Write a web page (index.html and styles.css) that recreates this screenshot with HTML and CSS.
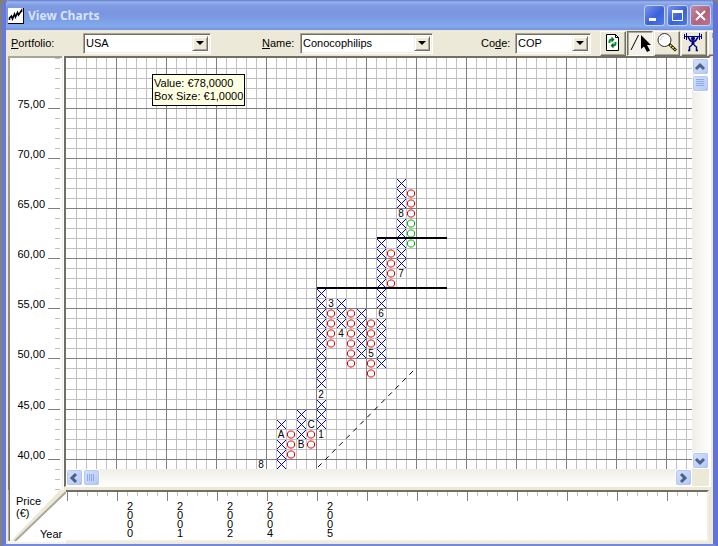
FILE: index.html
```html
<!DOCTYPE html>
<html lang="en">
<head>
<meta charset="utf-8">
<title>View Charts</title>
<link rel="stylesheet" href="styles.css">
</head>
<body>
<div class="window">
  <header class="titlebar">
    <svg class="app-icon" width="16" height="16" viewBox="0 0 16 16"><rect width="16" height="16" fill="#000"/><rect width="15" height="15" fill="#fff"/><path d="M1.500 12V10L3.500 8L4.500 11L6.500 6L7.500 9L9.500 4.500L10.500 7L13.500 2.500V4" fill="none" stroke="#000" stroke-width="1.600"/></svg>
    <h1>View Charts</h1>
    <button class="caption" aria-label="Minimize"><svg width="19" height="19"><rect x="4" y="12" width="7" height="3" fill="#fff"/></svg></button>
    <button class="caption" aria-label="Maximize"><svg width="19" height="19"><path d="M4.500 5V14.500H14.500V5" fill="none" stroke="#fff"/><rect x="4" y="4" width="11" height="3" fill="#fff"/></svg></button>
    <button class="caption close" aria-label="Close"><svg width="19" height="19"><path d="M5 5L14 14M14 5L5 14" stroke="#fff" stroke-width="2"/></svg></button>
  </header>

  <div class="toolbar">
    <label class="portfolio-label" for="portfolio"><u>P</u>ortfolio:</label>
    <div class="combo portfolio"><select id="portfolio"><option>USA</option></select><i class="arrow"></i></div>
    <label class="name-label" for="name"><u>N</u>ame:</label>
    <div class="combo name"><select id="name"><option>Conocophilips</option></select><i class="arrow"></i></div>
    <label class="code-label" for="code">Co<u>d</u>e:</label>
    <div class="combo code"><select id="code"><option>COP</option></select><i class="arrow"></i></div>
    <div class="tools">
      <button class="tool" aria-label="Refresh"><svg width="22" height="22"><path d="M4.500 2.500H13.500L16.500 5.500V18.500H4.500Z" fill="#fff" stroke="#000"/><path d="M13.500 2.500V5.500H16.500" fill="none" stroke="#000"/><path d="M7.500 11V9.500Q7.500 7.500 10 7.500M13.500 10V11.500Q13.500 13.500 11 13.500" fill="none" stroke="#00902c" stroke-width="2"/><path d="M9.500 4.500L12.500 7.500L9.500 10.500ZM11.500 10.500L8.500 13.500L11.500 16.500Z" fill="#006820"/></svg></button>
      <button class="tool pressed" aria-label="Draw line"><svg width="22" height="22"><path d="M2 18L9.500 3" stroke="#000"/><path d="M12 3V17L15 14.500L18 20L21 18.500L18 13H22Z" fill="#000"/></svg></button>
      <button class="tool" aria-label="Zoom"><svg width="22" height="22"><path d="M13 12L20 18.500" stroke="#000" stroke-width="3"/><path d="M14 13L19.500 18" stroke="#ffe020" stroke-width="1.500" stroke-dasharray="2 1"/><circle cx="8.500" cy="8" r="6.500" fill="#fff" stroke="#333"/><path d="M4.500 8A4 4 0 0 1 8 4" stroke="#ccc" fill="none"/></svg></button>
      <button class="tool" aria-label="Indicators"><svg width="22" height="22"><g stroke="#000080" fill="none"><path d="M1 4.500H19"/><path d="M1.500 2V7M3.500 1V8M16.500 1V8M18.500 2V7"/><path d="M5 5L7.500 9H12.500L15 5" stroke-width="1.500"/><path d="M10 9V13" stroke-width="3"/><path d="M9 13L6.500 15V18.500H5M11 13L13.500 15V18.500H15" stroke-width="1.500"/></g><circle cx="10" cy="6.500" r="2" fill="#000080"/></svg></button>
      <button class="tool" aria-label="More"><svg width="22" height="22"><path d="M2 1H16V6H2Z" fill="#aca899"/></svg></button>
    </div>
  </div>

  <main class="workspace">
    <div class="price-axis"><svg id="prices" width="100%" height="100%"></svg></div>
    <section class="chart">
      <div class="plot">
        <svg id="plot" width="100%" height="100%"></svg>
        <div class="tip">Value: €78,0000<br>Box Size: €1,0000</div>
      </div>
      <div class="track vertical">
        <button class="scroll" aria-label="Scroll up"><svg width="14" height="14"><path d="M3 9L7 5L11 9"/></svg></button>
        <div class="thumb"><svg width="14" height="14"><path d="M3 3.500H11M3 5.500H11M3 7.500H11M3 9.500H11"/></svg></div>
        <button class="scroll last" aria-label="Scroll down"><svg width="14" height="14"><path d="M3 5L7 9L11 5"/></svg></button>
      </div>
      <div class="track horizontal">
        <button class="scroll" aria-label="Scroll left"><svg width="14" height="14"><path d="M9 3L5 7L9 11"/></svg></button>
        <div class="thumb"><svg width="14" height="14"><path d="M3.500 4V11M5.500 4V11M7.500 4V11M9.500 4V11"/></svg></div>
        <button class="scroll last" aria-label="Scroll right"><svg width="14" height="14"><path d="M5 3L9 7L5 11"/></svg></button>
      </div>
    </section>
    <div class="corner">
      <svg width="58" height="54"><rect width="58" height="54" fill="#fff"/><path d="M0 0H1V51H0Z" fill="#aca899"/><path d="M1 0H2V51H1Z" fill="#716f64"/><path d="M52 0H58V2L6 51H3Z" fill="#ece9d8"/><path d="M58 2L7 51" stroke="#aca899" stroke-width="2"/><path d="M0 52H58V54H0Z" fill="#f4f2e8"/><text x="8" y="15">Price</text><text x="8" y="27">(€)</text><text x="32" y="48">Year</text></svg>
    </div>
    <div class="ruler"><svg id="years" width="100%" height="100%"></svg></div>
  </main>
</div>
<script src="chart.js"></script>
</body>
</html>
```
FILE: styles.css
```css
* { box-sizing: border-box; }
html, body { height: 100%; }
body {
  margin: 0;
  background: #808080;
  font: 11px/13px "Liberation Sans", Arial, sans-serif;
  color: #000;
  overflow: hidden;
}
svg { display: block; }
button { padding: 0; font: inherit; }
text { font: 11px "Liberation Sans", Arial, sans-serif; }
.month { font-size: 10px; }

.window {
  display: flex;
  flex-direction: column;
  height: 100vh;
  margin-left: 2px;
  border: solid #7489dd;
  border-width: 0 5px 2px 4px;
  border-left-color: #6878d8;
  border-right-color: #6173d3;
  border-radius: 7px 7px 0 0;
  background: #ece9d8;
  overflow: hidden;
}
.titlebar {
  display: flex;
  align-items: center;
  gap: 4px;
  flex: none;
  height: 30px;
  margin: 0 -5px 0 -4px;
  padding: 1px 7px 0 6px;
  background: linear-gradient(#6078d0 0, #9ab4ec 2px, #809ce4 5px, #7b96e0 14px, #7d9ee6 20px, #82aaec 26px, #7890dc 30px);
}
.titlebar h1 {
  flex: 1;
  margin: 0;
  color: #d8e4f8;
  font: bold 12px/20px "Open Sans", "Noto Sans", sans-serif;
}
.caption {
  width: 21px;
  height: 21px;
  margin-left: -2px;
  border: 1px solid #c4d2f4;
  border-radius: 3px;
  background: linear-gradient(135deg, #7794ec, #3c62d8 55%, #4c78ee);
}
.close { background: linear-gradient(135deg, #c28a9c, #b0647c 55%, #b87488); }

.toolbar {
  display: flex;
  align-items: center;
  flex: none;
  height: 26px;
  padding-left: 5px;
  overflow: hidden;
}
.toolbar label { flex: none; }
.portfolio-label { width: 72px; }
.name-label { width: 38px; margin-left: 51px; }
.code-label { width: 34px; margin-left: 48px; }
.combo {
  display: flex;
  flex: none;
  height: 21px;
  border: 1px solid;
  border-color: #aca899 #fff #fff #aca899;
  box-shadow: inset 1px 1px #716f64, inset -1px -1px #f1efe2;
  background: #fff;
  padding: 2px;
}
.portfolio { width: 128px; }
.name { width: 133px; }
.code { width: 76px; }
.combo select {
  flex: 1;
  min-width: 0;
  border: 0;
  padding: 0;
  appearance: none;
  background: none;
  font: inherit;
  color: inherit;
}
.arrow {
  display: flex;
  align-items: center;
  justify-content: center;
  width: 16px;
  border: 1px solid;
  border-color: #f1efe2 #716f64 #716f64 #f1efe2;
  box-shadow: inset 1px 1px #fff, inset -1px -1px #aca899;
  background: #ece9d8;
  pointer-events: none;
}
.arrow::before {
  content: "";
  border: solid transparent;
  border-width: 4px 4px 0;
  border-top-color: #000;
}
.tools { display: flex; flex: none; gap: 1px; margin-left: 9px; }
.tool {
  flex: none;
  width: 26px;
  height: 25px;
  border: 1px solid;
  border-color: #fff #716f64 #716f64 #fff;
  box-shadow: inset -1px -1px #aca899;
  background: #ece9d8;
}
.tool svg { margin-left: 1px; }
.pressed {
  border-color: #716f64 #fff #fff #716f64;
  box-shadow: inset 1px 1px #aca899;
  background: #f4f2ea;
}

.workspace {
  display: grid;
  grid-template-columns: 58px minmax(0, 1fr);
  grid-template-rows: minmax(0, 1fr) 54px;
  flex: 1;
  min-height: 0;
  padding: 0 3px 0 2px;
}
.price-axis {
  margin-right: 4px;
  border: solid #716f64;
  border-width: 2px 0 0 2px;
  border-image: linear-gradient(135deg, #aca899, #716f64) 1;
  background: #fff;
  box-shadow: 1px 0 #f1efe2, 2px 0 #fff;
  overflow: hidden;
}
.chart {
  display: grid;
  grid-template-columns: minmax(0, 1fr) 17px;
  grid-template-rows: minmax(0, 1fr) 17px;
  margin: 0 -1px 3px -2px;
  border: solid;
  border-width: 2px 2px 1px;
  border-color: #716f64 #fff #fff #716f64;
  background: #ece9d8;
}
.plot { position: relative; background: #fff; overflow: hidden; }
.tip {
  position: absolute;
  left: 86px;
  top: 16px;
  padding: 2px 1px;
  border: 1px solid #000;
  background: #ffffe1;
  white-space: nowrap;
}
.track { display: flex; background: linear-gradient(#f0eee8, #fefefb); }
.vertical { flex-direction: column; background: linear-gradient(90deg, #f0eee8, #fefefb); }
.scroll, .thumb {
  flex: none;
  width: 17px;
  height: 17px;
  border: 1px solid #fff;
  border-radius: 3px;
  background: linear-gradient(135deg, #d4e0fc, #b4c8f6);
  box-shadow: inset 0 0 0 1px #b4c8f4, inset -1px -1px #86a4dc;
}
.scroll path { fill: none; stroke: #4d6185; stroke-width: 3; }
.thumb path { stroke: #8caaf4; }
.last { margin: auto 0 0; }
.horizontal .last { margin: 0 0 0 auto; }
.ruler {
  margin: 0 1px 2px 0;
  border: solid #716f64;
  border-width: 2px 2px 2px 0;
  border-color: #716f64 #f1efe2 #f1efe2;
  background: #fff;
  overflow: hidden;
}
.corner { overflow: hidden; }
```
FILE: chart.js
```js
const NS = "http://www.w3.org/2000/svg";
const BOX = 10;
const EXTENT = 2400;

function add(parent, name, attrs, text) {
  const node = document.createElementNS(NS, name);
  for (const key in attrs) node.setAttribute(key, attrs[key]);
  if (text !== undefined) node.textContent = text;
  parent.appendChild(node);
  return node;
}
function rect(parent, x, y, width, height, fill) {
  add(parent, "rect", { x, y, width, height, fill });
}
const rowY = row => row * BOX + (row >= 33 ? 1 : 0);
const lineColor = i => (i % 5 === 0 ? "#808080" : "#c0c0c0");

const plot = document.getElementById("plot");
for (const major of [false, true]) {
  for (let i = 1; i < EXTENT / BOX; i++) {
    if ((i % 5 === 0) !== major) continue;
    rect(plot, i * BOX, 0, 1, EXTENT, lineColor(i));
    rect(plot, 0, rowY(i), EXTENT, 1, lineColor(i));
  }
}

// [column, first row, marks]; x = rise, o = fall, g = current fall, others = month.
const columns = [
  [19, 40, "8"],
  [21, 36, "xAxxx"],
  [22, 37, "ooo"],
  [23, 35, "xxxB"],
  [24, 36, "Coo"],
  [25, 23, "xxxxxxxxxx2xxx1"],
  [26, 24, "3oooo"],
  [27, 24, "xxx4"],
  [28, 25, "oooooo"],
  [29, 25, "xxxxx"],
  [30, 26, "ooo5oo"],
  [31, 18, "xxxxxxx6xxxxx"],
  [32, 19, "oooo"],
  [33, 12, "xxx8xxxxx7"],
  [34, 13, "oooggg"]
];
for (const [col, first, marks] of columns) {
  [...marks].forEach((mark, i) => {
    const x = col * BOX + 5;
    const y = rowY(first + i) + 5;
    if (mark === "x") {
      add(plot, "path", { d: `M${x - 4} ${y - 4}l9 9m0 -9l-9 9`, stroke: "#0000e0" });
    } else if (mark === "o" || mark === "g") {
      add(plot, "path", {
        d: `M${x - 1.5} ${y - 3}h3l2 2v3l-2 2h-3l-2 -2v-3z`,
        fill: "#fff", stroke: mark === "o" ? "#e80000" : "#00b400"
      });
    } else {
      rect(plot, x - 4, y - 4, 9, 9, "#fff");
      add(plot, "text", { x, y: y + 4, "text-anchor": "middle", class: "month" }, mark);
    }
  });
}
rect(plot, 311, 179, 70, 2, "#000");
rect(plot, 251, 229, 130, 2, "#000");
add(plot, "path", { d: "M252 409L350 310", stroke: "#000", "stroke-dasharray": "5 5" });

const prices = document.getElementById("prices");
for (let i = 0; i < EXTENT / BOX; i++) {
  const major = i % 5 === 0 && i > 0;
  rect(prices, major ? 38 : 45, rowY(i), major ? 12 : 5, 1, major ? "#808080" : "#c0c0c0");
}
for (let i = 1; i <= 8; i++) {
  add(prices, "text", { x: 35, y: rowY(i * 5), "text-anchor": "end" }, `${80 - i * 5},00`);
}

const years = document.getElementById("years");
for (let i = 0; i < EXTENT / BOX; i++) {
  rect(years, i * BOX + 1, 0, 1, i % 5 ? 4 : 9, lineColor(i));
}
for (const [x, year] of [[64, "2000"], [114, "2001"], [164, "2002"], [204, "2004"], [264, "2005"]]) {
  const label = add(years, "text", { "text-anchor": "middle" });
  [...year].forEach((digit, i) => add(label, "tspan", { x, y: 18 + i * 9 }, digit));
}
```
